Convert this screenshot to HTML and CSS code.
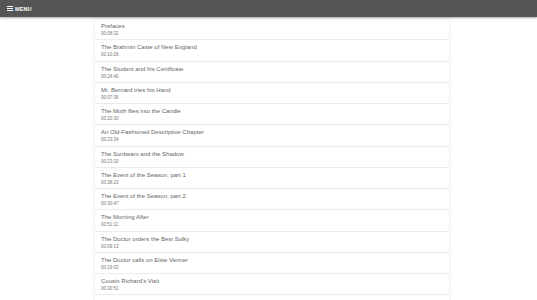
FILE: index.html
```html
<!DOCTYPE html>
<html lang="en">
<head>
    <meta charset="UTF-8">
    <meta name="viewport" content="width=device-width, initial-scale=1.0">
    <title>Chapters</title>
    <link rel="stylesheet" href="styles.css">
</head>
<body>
    <header class="topbar">
        <div class="menu">
            <span class="burger"><i></i><i></i><i></i></span>
            <span class="menu-label">MENU</span>
        </div>
    </header>

    <ul class="chapters">
        <li class="chapter"><div class="title">Prefaces</div><div class="time">00:08:32</div></li>
        <li class="chapter"><div class="title">The Brahmin Caste of New England</div><div class="time">00:10:26</div></li>
        <li class="chapter"><div class="title">The Student and his Certificate</div><div class="time">00:24:40</div></li>
        <li class="chapter"><div class="title">Mr. Bernard tries his Hand</div><div class="time">00:07:36</div></li>
        <li class="chapter"><div class="title">The Moth flies into the Candle</div><div class="time">00:20:30</div></li>
        <li class="chapter"><div class="title">An Old-Fashioned Descriptive Chapter</div><div class="time">00:23:34</div></li>
        <li class="chapter"><div class="title">The Sunbeam and the Shadow</div><div class="time">00:23:20</div></li>
        <li class="chapter"><div class="title">The Event of the Season, part 1</div><div class="time">00:38:23</div></li>
        <li class="chapter"><div class="title">The Event of the Season, part 2</div><div class="time">00:30:47</div></li>
        <li class="chapter"><div class="title">The Morning After</div><div class="time">00:51:11</div></li>
        <li class="chapter"><div class="title">The Doctor orders the Best Sulky</div><div class="time">00:09:13</div></li>
        <li class="chapter"><div class="title">The Doctor calls on Elsie Venner</div><div class="time">00:19:03</div></li>
        <li class="chapter"><div class="title">Cousin Richard's Visit</div><div class="time">00:30:51</div></li>
    </ul>
</body>
</html>
```

FILE: styles.css
```css
body {
    margin: 0;
    background-color: #ffffff;
    font-family: "Liberation Sans", Arial, sans-serif;
}

.topbar {
    height: 17px;
    background-color: #555555;
    box-shadow: 0 1px 2px rgba(0, 0, 0, 0.35);
    display: flex;
    align-items: center;
    padding-left: 7px;
}

.menu {
    display: flex;
    align-items: center;
    gap: 2px;
    color: #ffffff;
}

.burger {
    display: flex;
    flex-direction: column;
    gap: 1px;
    width: 6px;
}

.burger i {
    display: block;
    height: 1px;
    background-color: #ffffff;
}

.menu-label {
    font-size: 5.5px;
    font-weight: bold;
    letter-spacing: 0.1px;
}

.chapters {
    list-style: none;
    margin: 2px 0 0 95px;
    padding: 0 0 10px;
    width: 354px;
    box-shadow: 0 0 3px rgba(0, 0, 0, 0.12);
}

.chapter {
    padding: 3px 6px 2.25px;
    border-bottom: 1px solid #ececec;
}

.title {
    font-size: 6px;
    line-height: 8px;
    color: #666666;
}

.time {
    font-size: 4.5px;
    line-height: 7px;
    color: #777777;
}
```
